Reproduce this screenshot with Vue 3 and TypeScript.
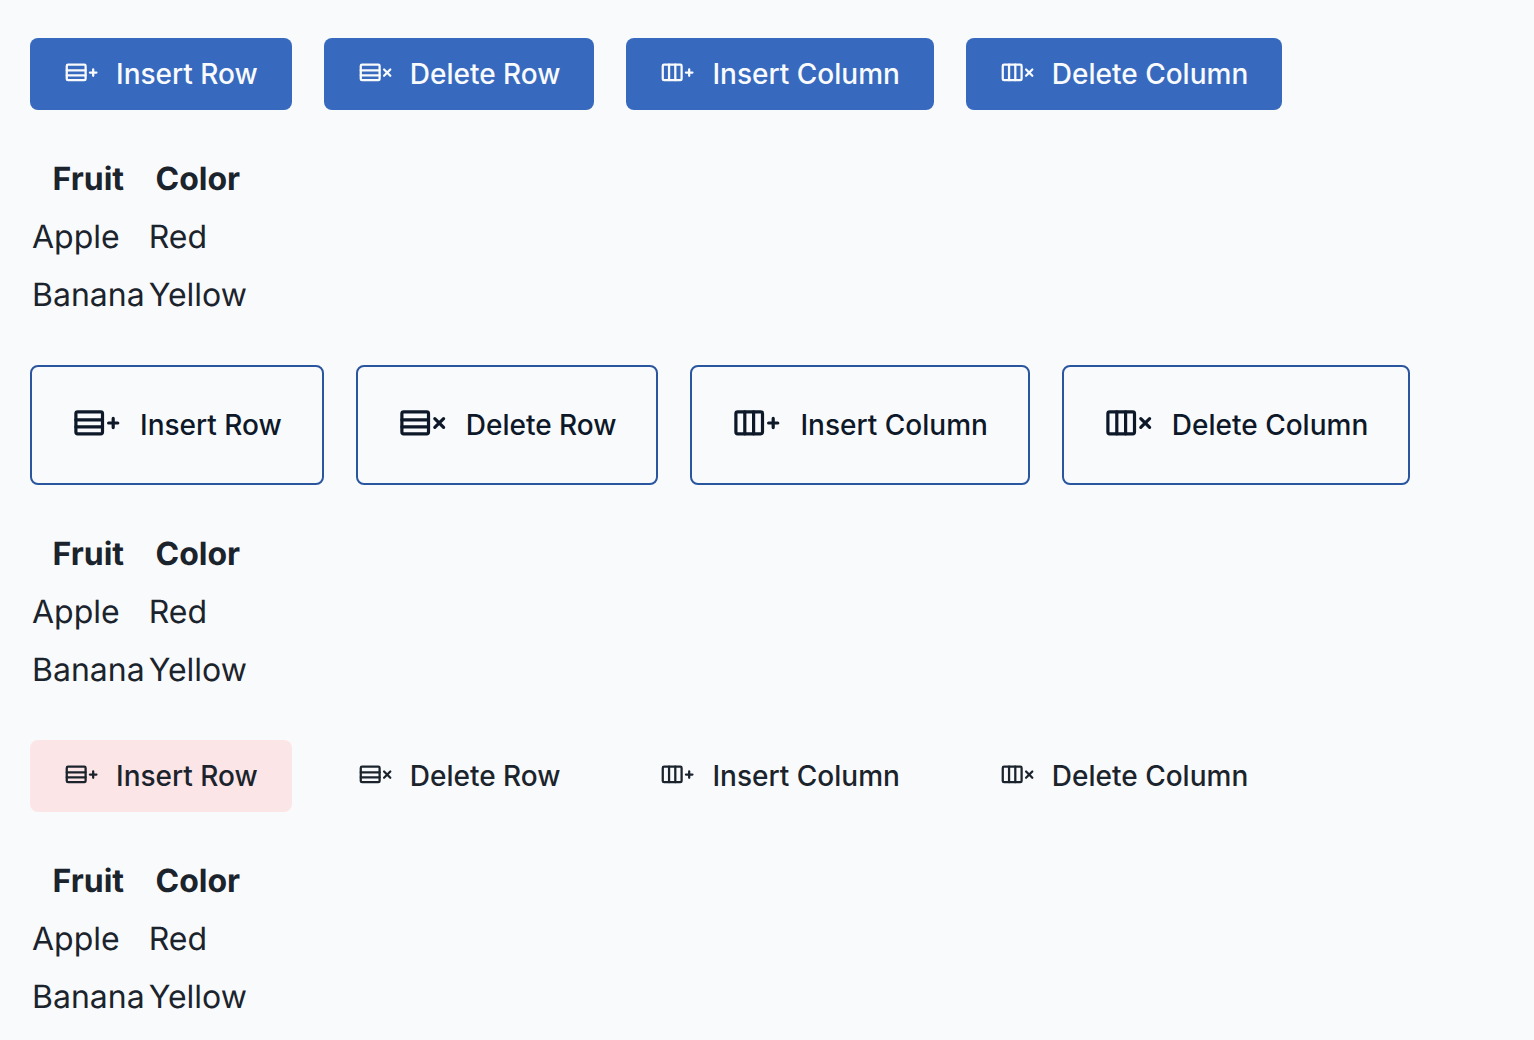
<script setup lang="ts">
interface Action {
  label: string
  column: boolean
  remove: boolean
}
const actions: Action[] = [
  { label: 'Insert Row', column: false, remove: false },
  { label: 'Delete Row', column: false, remove: true },
  { label: 'Insert Column', column: true, remove: false },
  { label: 'Delete Column', column: true, remove: true },
]
const variants = ['solid', 'outline', 'ghost']
const fruits = [
  { name: 'Apple', color: 'Red' },
  { name: 'Banana', color: 'Yellow' },
]
</script>

<template>
  <main class="page">
    <section v-for="variant in variants" :key="variant" class="group">
      <div class="toolbar">
        <button v-for="(action, i) in actions" :key="action.label" type="button" :class="['btn', variant, { active: variant === 'ghost' && i === 0 }]">
          <svg class="icon" viewBox="0 0 48 48" fill="none" stroke="currentColor" stroke-width="3.2" stroke-linecap="round" stroke-linejoin="round" aria-hidden="true">
            <rect x="3.9" y="10.8" width="26.6" height="22" rx="1.8" />
            <path v-if="action.column" d="M12.8 10.8v22M21.6 10.8v22" />
            <path v-else d="M3.9 18.8h26.6M3.9 25.8h26.6" />
            <path v-if="action.remove" d="M36.8 17.6l8.8 8.8M45.6 17.6l-8.8 8.8" />
            <path v-else d="M36.6 22h9.2M41.2 17.4v9.2" />
          </svg>
          <span>{{ action.label }}</span>
        </button>
      </div>
      <table class="data">
        <thead>
          <tr><th scope="col">Fruit</th><th scope="col">Color</th></tr>
        </thead>
        <tbody>
          <tr v-for="fruit in fruits" :key="fruit.name">
            <td>{{ fruit.name }}</td><td>{{ fruit.color }}</td>
          </tr>
        </tbody>
      </table>
    </section>
  </main>
</template>

<style>
body {
  background: #f9fafc;
}
</style>

<style scoped>
.page {
  display: flex;
  flex-direction: column;
  gap: 41px;
  padding: 38px 30px 0;
  font-family: Inter, sans-serif;
  font-size: 32px;
  color: #1b242c;
}
.toolbar {
  display: flex;
  gap: 32px;
  margin-bottom: 40px;
}
.btn {
  display: flex;
  align-items: center;
  gap: 18px;
  height: 72px;
  padding: 0 34px;
  border: 0;
  border-radius: 8px;
  background: transparent;
  color: #1b242c;
  font: 500 28px/40px Inter, sans-serif;
  white-space: nowrap;
}
.icon {
  width: 34px;
  height: 34px;
}
.solid {
  background: #376abf;
  color: #f9fafc;
}
.outline {
  gap: 20px;
  height: 120px;
  padding: 0 40px;
  border: 2px solid #2a569f;
  color: #0d1829;
}
.outline .icon {
  width: 48px;
  height: 48px;
}
.active {
  background: #fce5e7;
}
.data {
  border-spacing: 0;
  text-rendering: geometricPrecision;
}
.data th,
.data td {
  padding: 2px;
  line-height: 54px;
}
.data th {
  font-weight: 700;
}
</style>
